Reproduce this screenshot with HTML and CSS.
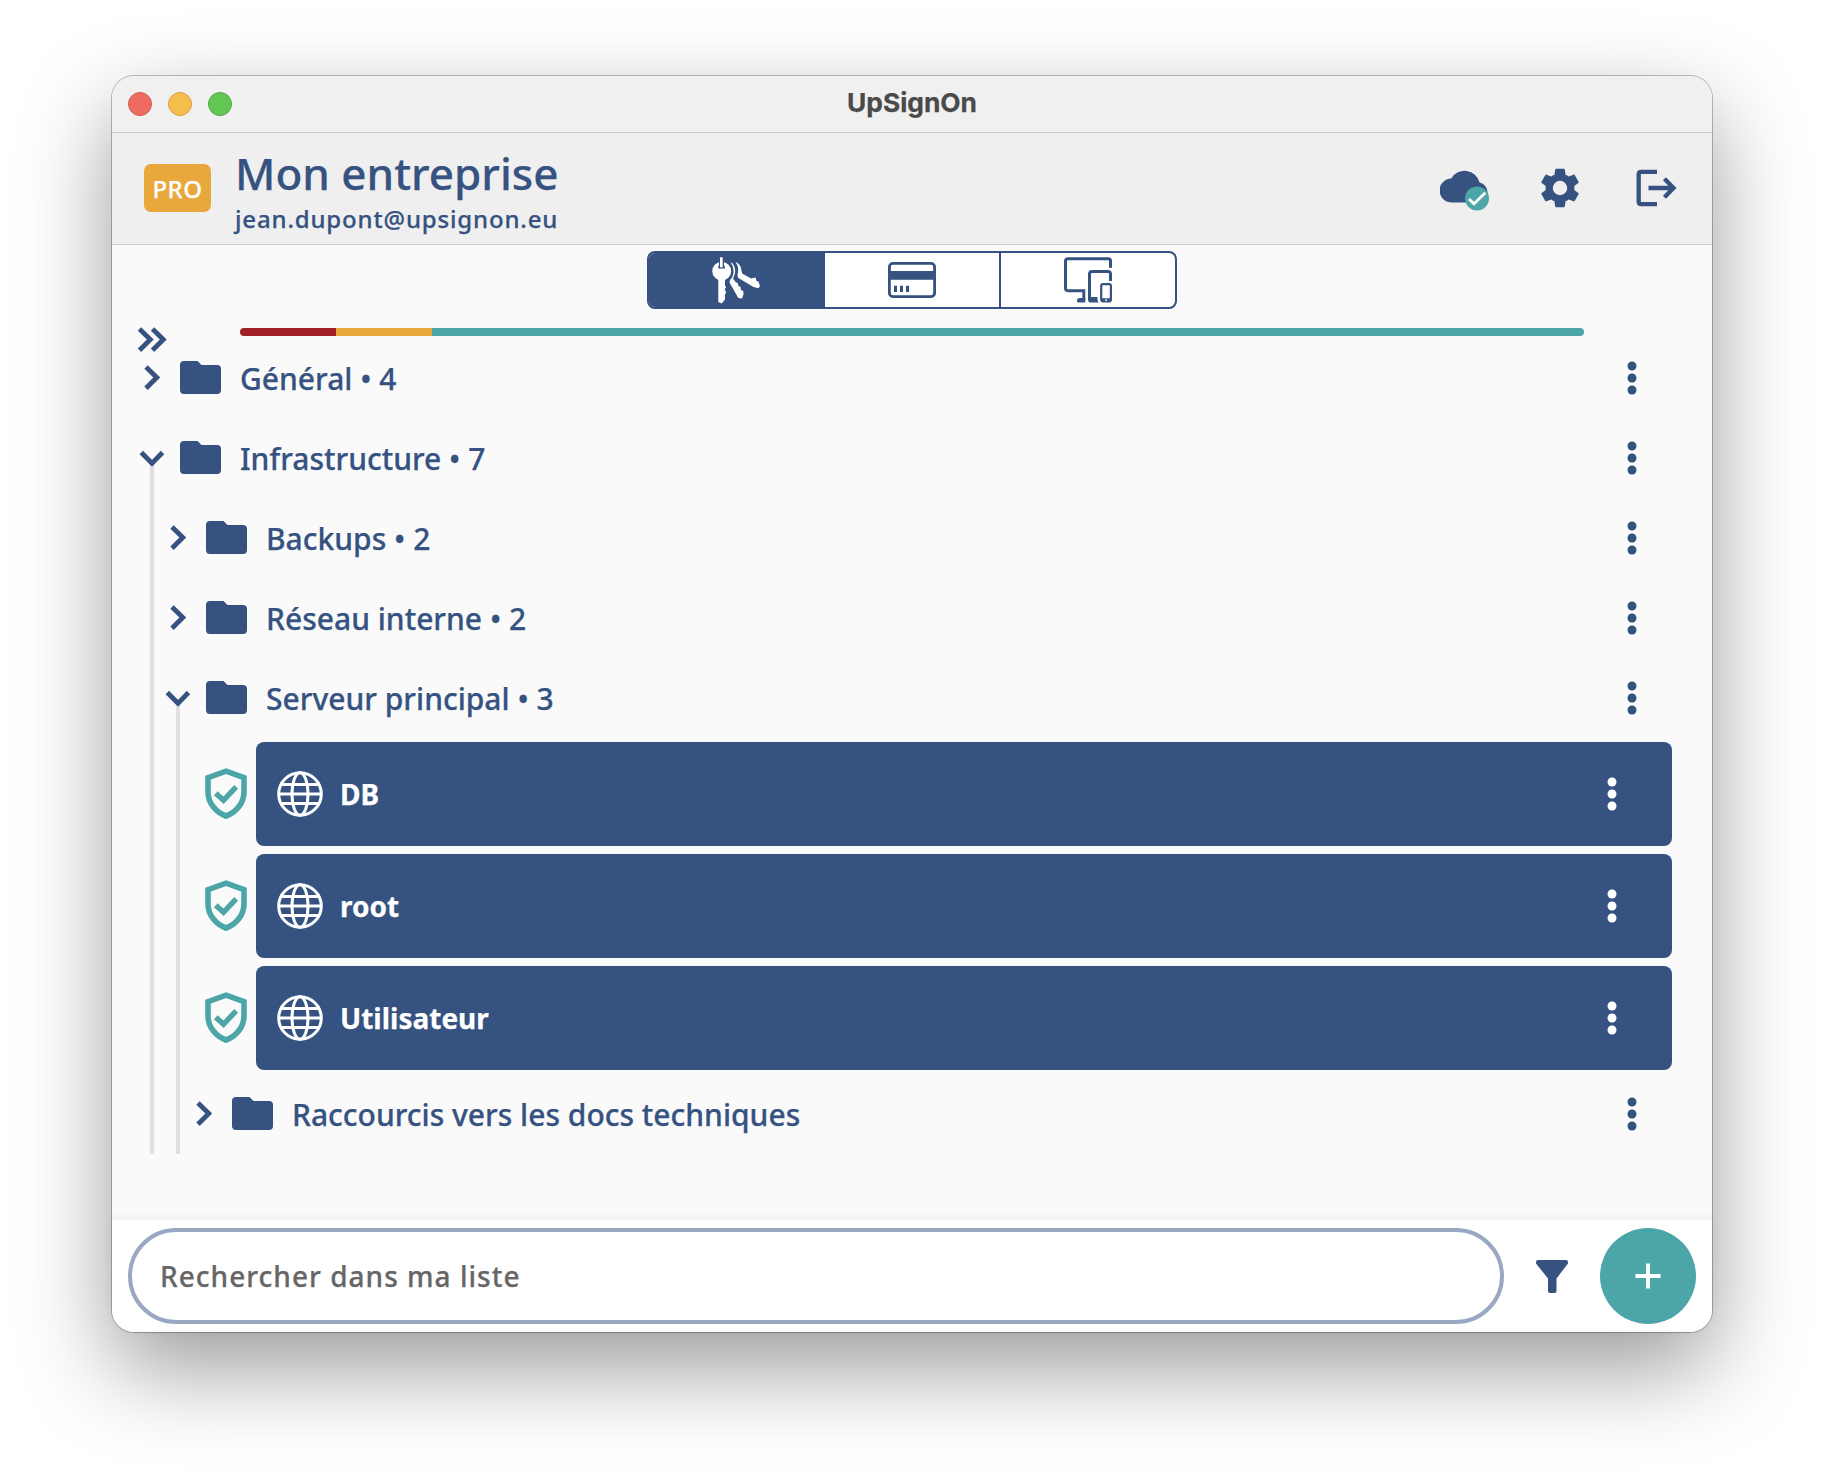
FILE: index.html
```html
<!DOCTYPE html>
<html lang="fr">
<head>
<meta charset="utf-8">
<title>UpSignOn</title>
<link rel="stylesheet" href="styles.css">
</head>
<body>
<svg class="sprite" aria-hidden="true">
  <symbol id="chevron" viewBox="0 0 16 26"><path d="M2 2 12.8 12.5 2 23.2" fill="none" stroke="currentColor" stroke-width="4.8"/></symbol>
  <symbol id="folder" viewBox="0 0 41 33"><path d="M4 0H17.5L21.5 4H37a4 4 0 0 1 4 4V29a4 4 0 0 1-4 4H4a4 4 0 0 1-4-4V4a4 4 0 0 1 4-4Z" fill="currentColor"/></symbol>
  <symbol id="dots" viewBox="0 0 10 34"><g fill="currentColor"><circle cx="5" cy="5" r="4.5"/><circle cx="5" cy="17" r="4.5"/><circle cx="5" cy="29" r="4.5"/></g></symbol>
  <symbol id="shield" viewBox="0 0 42 51"><path d="M21 3.2 39 9.7V24C39 35 31 44.500 21 48 11 44.500 3 35 3 24V9.700Z" fill="none" stroke="currentColor" stroke-width="5.600"/><path d="M10.800 25.200 18.500 32.300 31.200 18.800" fill="none" stroke="currentColor" stroke-width="5.400"/></symbol>
  <symbol id="globe" viewBox="0 0 46 46"><g fill="none" stroke="currentColor" stroke-width="3"><circle cx="23" cy="23" r="21.300"/><ellipse cx="23" cy="23" rx="8" ry="21.300"/><path d="M2 23H44M4.500 13.600H41.500M4.500 32.600H41.500"/></g></symbol>
</svg>
<div class="window">
  <div class="titlebar">
    <div class="lights"><i class="light red"></i><i class="light yellow"></i><i class="light green"></i></div>
    <div class="window-title">UpSignOn</div>
  </div>
  <header class="header">
    <span class="badge">PRO</span>
    <div class="account">
      <h1 class="company">Mon entreprise</h1>
      <div class="email">jean.dupont@upsignon.eu</div>
    </div>
    <nav class="actions">
      <svg class="sync" width="50" height="42" viewBox="0 0 50 42"><path d="M12 33.500A12 12 0 0 1 11.200 9.500 15.500 15.500 0 0 1 39.600 13.500 10.200 10.200 0 0 1 39 33.500Z" fill="#355280"/><circle cx="37" cy="29.500" r="12" fill="#4ca6a8"/><path d="M29 30 34 34.800 45.300 23.800" fill="none" stroke="#fff" stroke-width="2.800"/></svg>
      <svg class="settings" width="48" height="48" viewBox="0 0 24 24"><path fill="#355280" d="M19.140 12.940c.040-.3.060-.610.060-.940 0-.320-.020-.640-.070-.940l2.030-1.580c.180-.140.230-.410.120-.610l-1.920-3.320c-.120-.220-.370-.290-.590-.220l-2.390.960c-.5-.380-1.030-.7-1.620-.940L14.400 2.810c-.040-.240-.240-.410-.480-.410h-3.840c-.240 0-.430.170-.470.410L9.250 5.350c-.590.240-1.130.570-1.620.940L5.240 5.330c-.220-.080-.470 0-.590.220L2.740 8.870c-.120.210-.080.470.120.610l2.030 1.580c-.050.3-.090.630-.090.940s.020.640.070.940l-2.030 1.580c-.180.140-.230.410-.120.610l1.920 3.320c.120.220.370.290.590.220l2.390-.960c.5.380 1.030.7 1.620.940l.360 2.540c.050.240.240.410.480.410h3.840c.240 0 .440-.170.470-.410l.360-2.540c.590-.240 1.130-.560 1.620-.940l2.390.960c.220.080.470 0 .590-.220l1.920-3.320c.120-.220.070-.470-.120-.610zM12 15.600a3.600 3.600 0 1 1 0-7.200 3.600 3.600 0 0 1 0 7.200z"/></svg>
      <svg width="42" height="38" viewBox="0 0 42 38"><g fill="none" stroke="#355280" stroke-width="4.300"><path d="M21 2.800H5A2.300 2.300 0 0 0 2.700 5V33A2.300 2.300 0 0 0 5 35.200H21"/><path d="M12.500 19H37M28.500 9.800 37.500 19 28.500 28.200"/></g></svg>
    </nav>
  </header>
  <main class="content">
    <div class="tabs">
      <div class="tab active">
        <svg width="48" height="48" viewBox="0 0 48 48"><g fill="#fff"><circle cx="9.700" cy="15.200" r="9.400"/><path d="M6.300 22H13V29.500L14 31 12.800 33.500 14.200 36.500 12.800 39 13 43.500 9.700 47.500 6.300 46Z"/><path d="M19.500 6.300Q23.300 10 23.200 15.500 22.800 19.500 21 22.500L24 26.500 25.500 26.800 26.500 30 28.500 30.800 29 34 31.300 35 31.500 38.500 30 42.500 26.300 42 17.500 26.500 18 24Q22 20 21.500 14 21 9.500 19 7Z"/><path d="M24.300 6.300Q28.500 8.500 29 12.500L30.200 17.500 39 22.500 43.500 21.500 44.500 25 46.500 25.800 48 30 46.500 32.300 41.500 31 26 21.800 25.500 19Q27.500 11 24 7Z"/></g><path d="M6.300 12.500V9.800H7V5H12V9.800H12.800V12.500Z" fill="#355280"/><rect x="8" y="1" width="2.700" height="10.500" rx="1.300" fill="#fff"/></svg>
      </div>
      <div class="tab">
        <svg width="48" height="36" viewBox="0 0 48 36"><rect x="1.400" y="1.400" width="45.200" height="33.200" rx="3.500" fill="none" stroke="#355280" stroke-width="2.800"/><path d="M1 9H47V17.700H1ZM6 23.800h3v6.200h-3zM12 23.800h3v6.200h-3zM18 23.800h3v6.200h-3z" fill="#355280"/></svg>
      </div>
      <div class="tab">
        <svg width="48" height="48" viewBox="0 0 48 48"><g fill="none" stroke="#355280" stroke-width="3"><path d="M46.500 11.700V5A2.200 2.200 0 0 0 44.300 2.800H4A2.500 2.500 0 0 0 1.500 5V32.300A2.500 2.500 0 0 0 4 34.700H19.800V44"/><path d="M46.500 25V18A2.300 2.300 0 0 0 44.300 15.500H28A2.500 2.500 0 0 0 25.500 18V44"/><rect x="37.200" y="28.100" width="9.700" height="17.300" rx="1.800" stroke-width="2.200"/></g><path d="M21.300 46.600H14.500A1.800 1.800 0 0 1 13 44.500Q13 42 16 42H21.300ZM24 41H33.500V44L34.500 46.600H27A3 3 0 0 1 24 43.500ZM37 42.300H47V46H37Z" fill="#355280"/><circle cx="42" cy="44.200" r=".9" fill="#fff"/></svg>
      </div>
    </div>
    <div class="summary">
      <svg class="expand" width="30" height="26" viewBox="0 0 30 26"><path d="M2.500 2 13.300 12.500 2.500 23.200M15.500 2 26.300 12.500 15.500 23.200" fill="none" stroke="#355280" stroke-width="4.800"/></svg>
      <div class="strength"><span class="weak"></span><span class="medium"></span><span class="strong"></span></div>
    </div>
    <div class="tree">
      <div class="row"><svg class="chevron"><use href="#chevron"/></svg><svg class="folder"><use href="#folder"/></svg><span class="label">Général • 4</span><svg class="dots"><use href="#dots"/></svg></div>
      <div class="row"><svg class="chevron open"><use href="#chevron"/></svg><svg class="folder"><use href="#folder"/></svg><span class="label">Infrastructure • 7</span><svg class="dots"><use href="#dots"/></svg></div>
      <div class="branch">
        <div class="row"><svg class="chevron"><use href="#chevron"/></svg><svg class="folder"><use href="#folder"/></svg><span class="label">Backups • 2</span><svg class="dots"><use href="#dots"/></svg></div>
        <div class="row"><svg class="chevron"><use href="#chevron"/></svg><svg class="folder"><use href="#folder"/></svg><span class="label">Réseau interne • 2</span><svg class="dots"><use href="#dots"/></svg></div>
        <div class="row"><svg class="chevron open"><use href="#chevron"/></svg><svg class="folder"><use href="#folder"/></svg><span class="label">Serveur principal • 3</span><svg class="dots"><use href="#dots"/></svg></div>
        <div class="branch">
          <div class="entries">
            <div class="entry"><svg class="shield"><use href="#shield"/></svg><div class="card"><svg class="globe"><use href="#globe"/></svg><span class="name">DB</span><svg class="dots"><use href="#dots"/></svg></div></div>
            <div class="entry"><svg class="shield"><use href="#shield"/></svg><div class="card"><svg class="globe"><use href="#globe"/></svg><span class="name">root</span><svg class="dots"><use href="#dots"/></svg></div></div>
            <div class="entry"><svg class="shield"><use href="#shield"/></svg><div class="card"><svg class="globe"><use href="#globe"/></svg><span class="name">Utilisateur</span><svg class="dots"><use href="#dots"/></svg></div></div>
          </div>
          <div class="row"><svg class="chevron"><use href="#chevron"/></svg><svg class="folder"><use href="#folder"/></svg><span class="label">Raccourcis vers les docs techniques</span><svg class="dots"><use href="#dots"/></svg></div>
        </div>
      </div>
    </div>
  </main>
  <footer class="footer">
    <div class="search">Rechercher dans ma liste</div>
    <svg class="filter" width="32" height="33" viewBox="0 0 32 33"><path d="M2 0H30Q32 0 32 2V3.500L20.500 18.500V31Q20.500 33 18.500 33H14Q12 33 12 31V18.500L0 3.500V2Q0 0 2 0Z" fill="#355280"/></svg>
    <div class="add"><svg width="26" height="26" viewBox="0 0 26 26"><path d="M13 .5V25.500M.5 13H25.500" stroke="#fff" stroke-width="4"/></svg></div>
  </footer>
</div>
</body>
</html>
```
FILE: styles.css
```css
* { box-sizing: border-box; }
body {
  margin: 0;
  height: 1480px;
  padding: 76px 112px 0;
  background: #fff;
  color: #355280;
  font-family: "Noto Sans", sans-serif;
  -webkit-text-stroke: .25px currentColor;
  overflow: hidden;
}
svg { display: block; flex: none; }
.sprite { position: absolute; width: 0; height: 0; }
.window {
  width: 1600px;
  height: 1256px;
  display: flex;
  flex-direction: column;
  border-radius: 22px;
  background: #fafafa;
  box-shadow: 0 0 0 1px rgba(0, 0, 0, .25), 0 36px 92px rgba(0, 0, 0, .4);
}
.titlebar {
  height: 57px;
  display: grid;
  grid-template-columns: 1fr auto 1fr;
  align-items: center;
  padding: 0 16px;
  border-bottom: 1px solid #c8c8c8;
  border-radius: 22px 22px 0 0;
  background: #f0f0f0;
}
.lights { display: flex; gap: 16px; }
.light { width: 24px; height: 24px; border-radius: 50%; border: 1px solid; }
.red { background: #ed6b60; border-color: #d5574c; }
.yellow { background: #f5bf4f; border-color: #d9a13c; }
.green { background: #62c655; border-color: #51a83e; }
.window-title { padding-bottom: 2px; font: 700 26.3px/32px Inter, sans-serif; color: #4a4a4a; }
.header {
  height: 112px;
  display: flex;
  align-items: center;
  padding: 0 34px 2px 32px;
  border-bottom: 1px solid #cfcfcf;
  background: #efefef;
}
.badge {
  width: 67px;
  height: 48px;
  border-radius: 7px;
  background: #e9a83b;
  color: #fff;
  font-size: 24px;
  font-weight: 500;
  line-height: 49px;
  letter-spacing: .5px;
  text-align: center;
}
.account { margin-left: 24px; padding-top: 8px; }
.company { margin: 0; font-size: 44px; font-weight: 500; line-height: 54px; }
.email { font-size: 24px; font-weight: 500; line-height: 38px; letter-spacing: .84px; }
.actions { margin-left: auto; display: flex; align-items: center; gap: 48px; }
.sync { margin: 4px -1px 0 0; }
.settings { margin: 0 4px 0 -1px; }
.content { flex: 1; }
.tabs {
  width: 530px;
  height: 58px;
  margin: 6px auto 0;
  display: grid;
  grid-template-columns: 176px 176px 1fr;
  border: 2px solid #355280;
  border-radius: 8px;
  background: #fff;
  overflow: hidden;
}
.tab { display: flex; align-items: center; justify-content: center; }
.tab:not(:last-child) { border-right: 2px solid #355280; }
.active { background: #355280; }
.summary { height: 29px; display: flex; padding: 18px 128px 0 25px; }
.expand { margin-right: 73px; }
.strength { flex: 1; height: 8px; margin-top: 1px; display: flex; border-radius: 4px; overflow: hidden; }
.weak { flex: 1; background: #a01f27; }
.medium { flex: 1; background: #e9a83b; }
.strong { flex: 12; background: #4ca6a8; }
.tree { padding-left: 28px; }
.row { height: 80px; display: flex; align-items: center; padding-right: 75px; }
.chevron { width: 16px; height: 26px; margin: 0 19.500px 0 4px; }
.open { transform: translate(-.5px, .5px) rotate(90deg); }
.folder { width: 41px; height: 33px; margin-bottom: 1px; }
.label { margin-left: 19.500px; font-size: 30px; font-weight: 500; line-height: 40px; padding-top: 2px; }
.dots { width: 10px; height: 34px; margin-left: auto; }
.branch {
  margin-top: -33px;
  padding: 33px 0 0 26px;
  background: linear-gradient(#e0e0e0, #e0e0e0) 10px 0 / 4px 100% no-repeat;
}
.entries { display: flex; flex-direction: column; gap: 8px; padding: 4px 0; margin-left: 13px; }
.entry { display: flex; align-items: center; }
.shield { width: 42px; height: 51px; margin-bottom: 1px; color: #4ca6a8; }
.card {
  flex: 1;
  height: 104px;
  margin: 0 40px 0 9px;
  padding: 0 55px 0 21px;
  display: flex;
  align-items: center;
  border-radius: 8px;
  background: #355280;
  color: #fff;
}
.globe { width: 46px; height: 46px; }
.name { margin-left: 17px; font-size: 28px; font-weight: 700; }
.footer {
  height: 112px;
  display: flex;
  align-items: center;
  padding: 0 16px;
  border-radius: 0 0 22px 22px;
  background: #fff;
  box-shadow: 0 -2px 8px rgba(0, 0, 0, .06);
}
.search {
  flex: 1;
  height: 96px;
  padding: 0 28px;
  border: 4px solid #99a8c0;
  border-radius: 48px;
  color: #666;
  font-size: 28px;
  font-weight: 500;
  line-height: 88px;
  letter-spacing: 1.02px;
}
.filter { margin: 0 32px; }
.add {
  width: 96px;
  height: 96px;
  display: flex;
  align-items: center;
  justify-content: center;
  border-radius: 50%;
  background: #4ca6a8;
}
```
